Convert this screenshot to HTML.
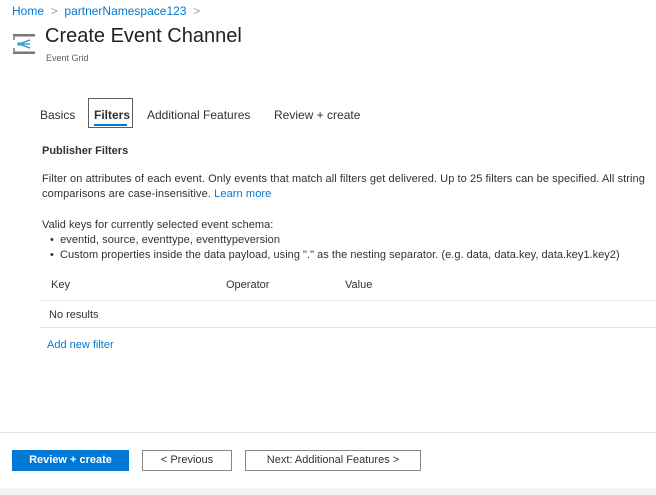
<!DOCTYPE html>
<html><head><meta charset="utf-8"><style>
*{margin:0;padding:0;box-sizing:border-box}
body{width:656px;height:495px;background:#fff;font-family:"Liberation Sans",sans-serif;color:#323130;position:relative;overflow:hidden;font-size:11px}
.a{position:absolute;white-space:nowrap}
.link{color:#0078d4}
.btn{position:absolute;height:21px;border:1px solid #8a8886;background:#fff;font-size:11px;text-align:center;line-height:19px;color:#323130}
</style></head><body>
<div class="a" style="left:12px;top:4px;font-size:12px"><span class="link">Home</span> <span style="color:#a19f9d">&nbsp;&gt;&nbsp;</span> <span class="link">partnerNamespace123</span> <span style="color:#a19f9d">&nbsp;&gt;</span></div>
<svg class="a" style="left:12px;top:33px" width="24" height="22" viewBox="0 0 24 22">
<rect x="1" y="1" width="22" height="2.5" fill="#777"/>
<rect x="1" y="18.5" width="22" height="2.5" fill="#777"/>
<rect x="1" y="3" width="2" height="4" fill="#999"/>
<rect x="1" y="15" width="2" height="4" fill="#999"/>
<path d="M7 11 L18 7 M7 11 L18 11 M7 11 L18 15" stroke="#3aa0dc" stroke-width="1.5" fill="none"/>
<circle cx="7" cy="11" r="1.8" fill="#3aa0dc"/>
</svg>
<div class="a" style="left:45px;top:25px;font-size:20px;color:#201f1e">Create Event Channel</div>
<div class="a" style="left:46px;top:53px;font-size:9px;color:#605e5c">Event Grid</div>

<div class="a" style="left:40px;top:108px;font-size:12px">Basics</div>
<div class="a" style="left:88px;top:98px;width:45px;height:30px;border:1px solid #605e5c"></div>
<div class="a" style="left:94px;top:108px;font-size:12px;font-weight:bold">Filters</div>
<div class="a" style="left:94px;top:124px;width:33px;height:2px;background:#0078d4"></div>
<div class="a" style="left:147px;top:108px;font-size:12px">Additional Features</div>
<div class="a" style="left:274px;top:108px;font-size:12px">Review + create</div>

<div class="a" style="left:42px;top:145px;font-size:11px;font-weight:bold">Publisher Filters</div>
<div class="a" style="left:42px;top:173px;letter-spacing:0.08px">Filter on attributes of each event. Only events that match all filters get delivered. Up to 25 filters can be specified. All string</div>
<div class="a" style="left:42px;top:188px;letter-spacing:0.1px">comparisons are case-insensitive. <span class="link">Learn more</span></div>
<div class="a" style="left:42px;top:219px;letter-spacing:0.05px">Valid keys for currently selected event schema:</div>
<div class="a" style="left:50px;top:234px;letter-spacing:0.05px">•&nbsp; eventid, source, eventtype, eventtypeversion</div>
<div class="a" style="left:50px;top:249px;letter-spacing:0.03px">•&nbsp; Custom properties inside the data payload, using "." as the nesting separator. (e.g. data, data.key, data.key1.key2)</div>

<div class="a" style="left:51px;top:279px">Key</div>
<div class="a" style="left:226px;top:279px">Operator</div>
<div class="a" style="left:345px;top:279px">Value</div>
<div class="a" style="left:40px;top:300px;width:616px;height:1px;background:#edebe9"></div>
<div class="a" style="left:49px;top:309px">No results</div>
<div class="a" style="left:40px;top:327px;width:616px;height:1px;background:#e1dfdd"></div>
<div class="a link" style="left:47px;top:339px">Add new filter</div>

<div class="a" style="left:0;top:432px;width:656px;height:1px;background:#e1dfdd"></div>
<div class="btn" style="left:12px;top:450px;width:117px;background:#0078d4;border-color:#0078d4;color:#fff;font-weight:bold">Review + create</div>
<div class="btn" style="left:142px;top:450px;width:90px">&lt; Previous</div>
<div class="btn" style="left:245px;top:450px;width:176px">Next: Additional Features &gt;</div>
<div class="a" style="left:0;top:488px;width:656px;height:7px;background:#f3f2f1"></div>
</body></html>
